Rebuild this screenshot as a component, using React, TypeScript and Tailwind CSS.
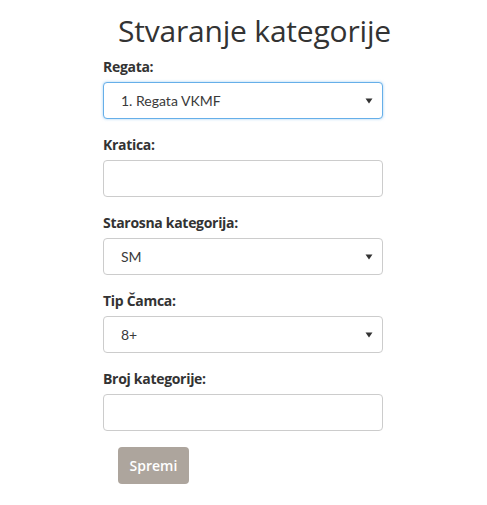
const fields = [
  { label: "Regata:", kind: "select", value: "1. Regata VKMF", focused: true },
  { label: "Kratica:", kind: "input", value: "" },
  { label: "Starosna kategorija:", kind: "select", value: "SM" },
  { label: "Tip Čamca:", kind: "select", value: "8+" },
  { label: "Broj kategorije:", kind: "input", value: "" },
];

function Caret() {
  return (
    <svg width="8" height="6" viewBox="0 0 8 6" className="shrink-0">
      <path d="M0.5 0.5 H7.5 L4 5.5 Z" fill="#333" />
    </svg>
  );
}

export default function App() {
  return (
    <div className="min-h-[505px] w-[487px] bg-white text-[#333] [font-family:'Open_Sans',sans-serif]">
      <h1 className="pl-[118px] pt-[13px] text-[30px] font-normal leading-[36px] tracking-[-0.2px] text-[#333]">
        Stvaranje kategorije
      </h1>

      <form className="ml-[103px] mt-[8px] w-[280px]">
        {fields.map((f) => (
          <div key={f.label} className="mb-[16px]">
            <label className="mb-[5px] block text-[14px] font-bold leading-[20px] tracking-[-0.3px] text-[#333]">
              {f.label}
            </label>
            <div
              className={
                "flex h-[37px] items-center justify-between rounded-[4px] border bg-white pl-[17px] pr-[9px] text-[14px] text-[#3a3a3a] [font-family:Lato,sans-serif] " +
                (f.focused
                  ? "border-[#66afe9] shadow-[0_0_3px_rgba(102,175,233,0.6)]"
                  : "border-[#ccc]")
              }
            >
              <span>{f.value}</span>
              {f.kind === "select" && <Caret />}
            </div>
          </div>
        ))}

        <button
          type="button"
          className="ml-[15px] h-[37px] w-[71px] rounded-[4px] bg-[#ada59d] text-[14px] font-semibold text-white"
        >
          Spremi
        </button>
      </form>
    </div>
  );
}
